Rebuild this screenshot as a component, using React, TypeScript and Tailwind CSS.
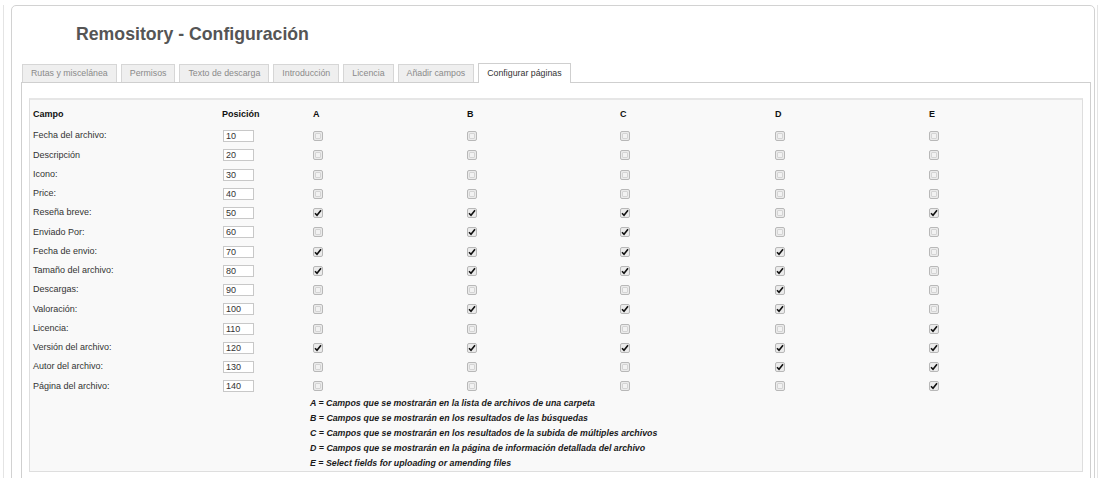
import React from 'react';

type Row = { label: string; pos: number; checks: boolean[] };

const tabs = [
  'Rutas y miscelánea',
  'Permisos',
  'Texto de descarga',
  'Introducción',
  'Licencia',
  'Añadir campos',
  'Configurar páginas',
];

const rows: Row[] = [
  { label: 'Fecha del archivo:', pos: 10, checks: [false, false, false, false, false] },
  { label: 'Descripción', pos: 20, checks: [false, false, false, false, false] },
  { label: 'Icono:', pos: 30, checks: [false, false, false, false, false] },
  { label: 'Price:', pos: 40, checks: [false, false, false, false, false] },
  { label: 'Reseña breve:', pos: 50, checks: [true, true, true, false, true] },
  { label: 'Enviado Por:', pos: 60, checks: [false, true, true, false, false] },
  { label: 'Fecha de envio:', pos: 70, checks: [true, true, true, true, false] },
  { label: 'Tamaño del archivo:', pos: 80, checks: [true, true, true, true, false] },
  { label: 'Descargas:', pos: 90, checks: [false, false, false, true, false] },
  { label: 'Valoración:', pos: 100, checks: [false, true, true, true, false] },
  { label: 'Licencia:', pos: 110, checks: [false, false, false, false, true] },
  { label: 'Versión del archivo:', pos: 120, checks: [true, true, true, true, true] },
  { label: 'Autor del archivo:', pos: 130, checks: [false, false, false, true, true] },
  { label: 'Página del archivo:', pos: 140, checks: [false, false, false, false, true] },
];

const legend = [
  'A = Campos que se mostrarán en la lista de archivos de una carpeta',
  'B = Campos que se mostrarán en los resultados de las búsquedas',
  'C = Campos que se mostrarán en los resultados de la subida de múltiples archivos',
  'D = Campos que se mostrarán en la página de información detallada del archivo',
  'E = Select fields for uploading or amending files',
];

const cols = 'grid grid-cols-[189px_91px_154px_153px_155px_154px_1fr]';

function Check({ on }: { on: boolean }) {
  return (
    <span className="flex w-[10px] h-[10px] items-center justify-center rounded-[2px] border border-[#b8b8b8] bg-[#ebebeb]">
      {on ? (
        <svg width="8" height="8" viewBox="0 0 8 8">
          <path d="M1 4.3 L3 6.3 L7 1.3" fill="none" stroke="#111" strokeWidth="1.6" />
        </svg>
      ) : (
        <span className="w-[6px] h-[6px] rounded-[1px] border border-[#d4d4d4] bg-[#f2f2f2]" />
      )}
    </span>
  );
}

export default function App() {
  return (
    <div
      className="h-[478px] w-[1100px] overflow-hidden bg-white"
      style={{ fontFamily: '"Liberation Sans", Arial, sans-serif' }}
    >
      <div className="ml-[3px] h-full w-[1095px] border-x border-[#e4e4e4]">
        <div className="ml-[7px] mr-[2px] mt-[5px] h-[500px] rounded-[5px] border border-[#d2d2d2] pl-[9px] pr-[3px]">
          {/* Title */}
          <h1 className="pl-[55px] pt-[18px] text-[17.7px] leading-[21px] font-bold text-[#555]">
            Remository - Configuración
          </h1>

          {/* Tabs */}
          <div className="mt-[18px] flex items-end gap-[4px] pl-[1px]">
            {tabs.map((t, i) =>
              i === tabs.length - 1 ? (
                <div
                  key={t}
                  className="relative -mb-px flex h-[20px] items-center border border-b-0 border-[#cfcfcf] bg-white px-[8px] text-[8.8px] text-[#333]"
                >
                  {t}
                </div>
              ) : (
                <div
                  key={t}
                  className="flex h-[18px] items-center border border-b-0 border-[#d6d6d6] bg-[#efefef] px-[8px] text-[8.8px] text-[#8a8a8a]"
                >
                  {t}
                </div>
              )
            )}
          </div>

          {/* Panel */}
          <div className="h-[400px] border border-[#cfcfcf] px-[7px] pt-[15px]">
            <div className="border border-[#dedede] border-t-2 border-t-[#e6e6e6] bg-[#f9f9f9] pl-[3px] pt-[2px] text-[9px] text-[#333]">
              <div className={`${cols} h-[24.5px] items-center font-bold text-[#111]`}>
                <span>Campo</span>
                <span>Posición</span>
                <span>A</span>
                <span>B</span>
                <span>C</span>
                <span>D</span>
                <span>E</span>
              </div>
              {rows.map((r) => (
                <div key={r.label} className={`${cols} h-[19.25px] items-center`}>
                  <span>{r.label}</span>
                  <span>
                    <input
                      readOnly
                      defaultValue={r.pos}
                      className="ml-[1px] block h-[12px] w-[31px] border border-[#c8c8c8] bg-white px-[2px] text-[9px] leading-[10px] text-[#333] outline-none"
                    />
                  </span>
                  {r.checks.map((c, i) => (
                    <span key={i}>
                      <Check on={c} />
                    </span>
                  ))}
                </div>
              ))}
              <div className={`${cols}`}>
                <div className="col-start-3 col-span-5 -ml-[3px]">
                  {legend.map((l) => (
                    <div key={l} className="h-[15px] leading-[15px] text-[8.8px] font-bold italic text-[#1a1a1a]">
                      {l}
                    </div>
                  ))}
                </div>
              </div>
            </div>
          </div>
        </div>
      </div>
    </div>
  );
}
